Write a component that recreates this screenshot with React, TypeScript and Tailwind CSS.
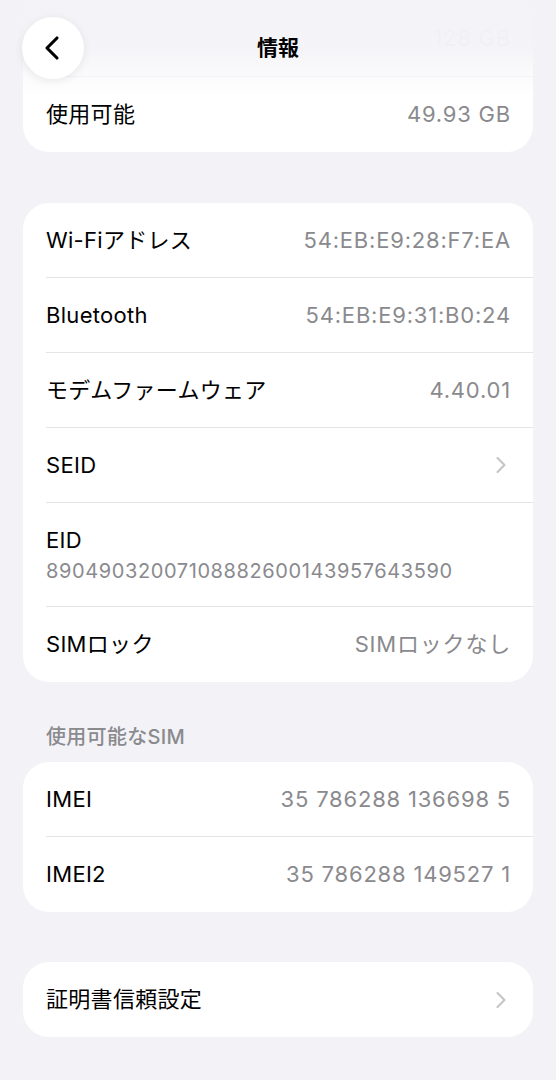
import { ChevronLeft, ChevronRight } from 'lucide-react';

const font = { fontFamily: 'Inter, "Noto Sans CJK JP", sans-serif' };

function Row({ label, value, chevron, last }: { label: string; value?: string; chevron?: boolean; last?: boolean }) {
  return (
    <div className="pl-[23px]">
      <div className={`flex h-[75px] items-center justify-between pr-[22px] ${last ? '' : 'border-b border-[#e3e3e8]'}`}>
        <span className="text-[22px] tracking-[0.3px] text-black">{label}</span>
        {value && <span className="text-[22px] tracking-[0.8px] text-[#8a8a8e]">{value}</span>}
        {chevron && <ChevronRight className="-mr-[4px] h-[28px] w-[28px] text-[#c4c4c8]" strokeWidth={1.8} />}
      </div>
    </div>
  );
}

function Card({ children, className = '' }: { children: React.ReactNode; className?: string }) {
  return <div className={`mx-[23px] overflow-hidden rounded-[26px] bg-white ${className}`}>{children}</div>;
}

export default function App() {
  return (
    <div className="relative min-h-[1080px] w-[556px] bg-[#f2f2f7] antialiased" style={font}>
      {/* top bar over the scrolled content */}
      <div className="pointer-events-none absolute inset-x-0 top-0 z-10 h-[96px] bg-gradient-to-b from-[#f2f2f7] via-[#f2f2f7]/80 to-transparent" />
      <div className="absolute inset-x-0 top-0 z-20 flex h-[96px] items-start">
        <button className="ml-[22px] mt-[17px] flex h-[62px] w-[62px] items-center justify-center rounded-full bg-white shadow-[0_2px_10px_rgba(0,0,0,0.08)]">
          <ChevronLeft className="-ml-[2px] h-[40px] w-[40px] text-black" strokeWidth={1.9} />
        </button>
        <div className="absolute left-0 right-0 top-[32px] text-center text-[21px] font-bold text-black">情報</div>
      </div>

      <Card className="rounded-t-none">
        <div className="pl-[23px]">
          <div className="flex h-[77px] items-center justify-end border-b border-[#f4f4f7] pr-[22px]">
            <span className="text-[22px] tracking-[0.8px] text-[#8a8a8e] opacity-20">128 GB</span>
          </div>
        </div>
        <Row label="使用可能" value="49.93 GB" last />
      </Card>

      <Card className="mt-[51px]">
        <Row label="Wi-Fiアドレス" value="54:EB:E9:28:F7:EA" />
        <Row label="Bluetooth" value="54:EB:E9:31:B0:24" />
        <Row label="モデムファームウェア" value="4.40.01" />
        <Row label="SEID" chevron />
        <div className="pl-[23px]">
          <div className="flex h-[104px] flex-col justify-center border-b border-[#e3e3e8] pr-[22px]">
            <span className="text-[22px] leading-[30px] tracking-[0.3px] text-black">EID</span>
            <span className="mt-[2px] text-[20px] leading-[28px] tracking-[0.6px] text-[#8a8a8e]">89049032007108882600143957643590</span>
          </div>
        </div>
        <Row label="SIMロック" value="SIMロックなし" last />
      </Card>

      <div className="mx-[46px] mt-[40px] mb-[10px] text-[20px] font-medium tracking-[0.3px] text-[#8a8a8e]">使用可能なSIM</div>
      <Card>
        <Row label="IMEI" value="35 786288 136698 5" />
        <Row label="IMEI2" value="35 786288 149527 1" last />
      </Card>

      <Card className="mt-[50px]">
        <Row label="証明書信頼設定" chevron last />
      </Card>
    </div>
  );
}
